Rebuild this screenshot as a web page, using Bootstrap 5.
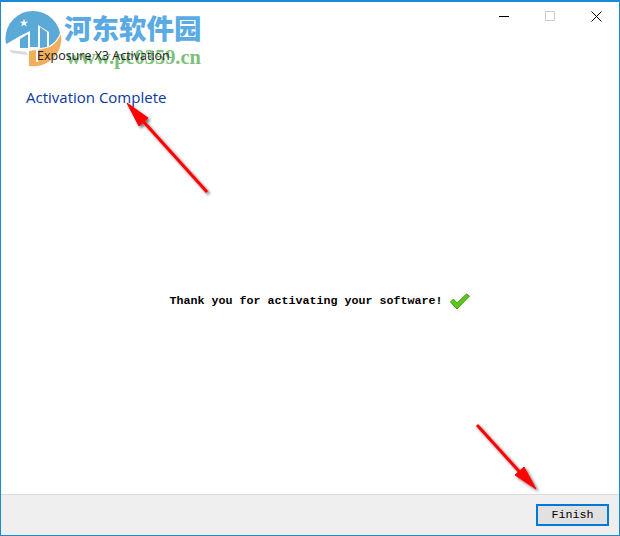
<!doctype html>
<html lang="en">
<head>
  <meta charset="utf-8">
  <title>Exposure X3 Activation</title>
  <link href="https://cdn.jsdelivr.net/npm/bootstrap@5.3.7/dist/css/bootstrap.min.css" rel="stylesheet">
  <style>
    html, body { height: 100%; background: #fff; overflow: hidden; }
    .win-frame {
      position: relative;
      width: 620px;
      height: 536px;
      border: 1px solid #1a8ad4;
      border-top-width: 2px;
      background: #fff;
    }
    .win-btn-cell { width: 46px; height: 28px; }
    .title-text {
      font: 12.5px "Open Sans", sans-serif;
      color: #222;
      padding: 17px 0 0 36px;
      line-height: 17px;
    }
    .heading-text {
      font: 15px "Open Sans", sans-serif;
      color: #0a3aa0;
      padding: 23px 0 0 25px;
      line-height: 20px;
    }
    .thanks-row { padding-left: 20px; padding-top: 1px; }
    .thanks-text {
      font: bold 11.66px "Liberation Mono", monospace;
      color: #000;
    }
    .foot-bar {
      height: 41px;
      background: #efefef;
      border-top: 1px solid #dcdcdc;
      padding: 9px 10px 0 0;
    }
    .finish-btn {
      width: 73px;
      height: 22px;
      padding: 1px 0 0;
      border: 2px solid #0078d7;
      border-radius: 0;
      background: #e1e1e1;
      color: #000;
      font: 11.66px/17px "Liberation Mono", monospace;
    }
    .wm-layer { position: absolute; left: -1px; top: -2px; pointer-events: none; }
    .wm-title {
      position: absolute;
      left: 63px;
      top: 9px;
      font: 900 27.5px/32px "Noto Sans CJK SC", sans-serif;
      color: #5aaae3;
      white-space: nowrap;
    }
    .wm-url {
      position: absolute;
      left: 65px;
      top: 44px;
      font: 700 20.4px/22px "Liberation Serif", serif;
      color: #7dc079;
      white-space: nowrap;
    }
    .title-over { position: relative; z-index: 2; }
    .arrow-layer { position: absolute; left: -1px; top: -2px; z-index: 3; pointer-events: none; }
  </style>
</head>
<body>

<div class="win-frame d-flex flex-column">
  <div class="d-flex justify-content-end flex-shrink-0">
    <div class="win-btn-cell d-flex align-items-center justify-content-center">
      <svg width="10" height="10"><path d="M0 5.500h10" stroke="#000"/></svg>
    </div>
    <div class="win-btn-cell d-flex align-items-center justify-content-center">
      <svg width="10" height="10"><rect x=".5" y=".5" width="9" height="9" fill="none" stroke="#ccc"/></svg>
    </div>
    <div class="win-btn-cell d-flex align-items-center justify-content-center">
      <svg width="11" height="11"><path d="M.5.5l10 10M10.500.5l-10 10" stroke="#000" fill="none"/></svg>
    </div>
  </div>
  <div class="title-text title-over">Exposure X3 Activation</div>

  <div class="heading-text">Activation Complete</div>

  <div class="flex-grow-1 d-flex justify-content-center align-items-center">
    <div class="thanks-row d-flex align-items-center gap-2">
      <span class="thanks-text">Thank you for activating your software!</span>
      <svg width="20" height="17" viewBox="0 0 20 17">
        <path d="M.5 9L7 16 19.500 3 16.500 1 7 10 3.500 6z" fill="#5cc81a" stroke="#3f9a12" stroke-width="1" stroke-linejoin="round"/>
      </svg>
    </div>
  </div>

  <div class="foot-bar d-flex justify-content-end flex-shrink-0">
    <button type="button" class="btn finish-btn">Finish</button>
  </div>

  <!-- watermark logo, drawn in page coordinates -->
  <svg class="wm-layer" width="70" height="72" viewBox="0 0 70 72">
    <path d="M6 44A27.500 27.500 0 0 1 60 33C58 39 54 43 49 46V32L38 25V47H30V31L20 36 8 43z" fill="#5aa9d6"/>
    <path d="M24 19l1.200 2.800h3l-2.400 1.800 1 2.900-2.800-1.700-2.800 1.700 1-2.900-2.400-1.800h3z" fill="#fff"/>
    <path d="M40 27l7 5v15l-7 1z" fill="#5aa9d6"/>
    <path d="M20 39l8-5v14H20z" fill="#5aa9d6"/>
    <path d="M61 34A28 28 0 0 1 29 66V51l7-1v12h2V50l12-3C55 44 59 39 61 34z" fill="#f3ae5c"/>
    <path d="M9 50L26 52 28 55 12 53z" fill="#d9d9d9"/>
  </svg>
  <div class="wm-title">河东软件园</div>
  <div class="wm-url">www.pc0359.cn</div>

  <svg class="arrow-layer" width="620" height="536" viewBox="0 0 620 536">
    <defs>
      <filter id="arrowShade" x="-30%" y="-30%" width="160%" height="160%">
        <feDropShadow dx="2" dy="2" stdDeviation="1.500" flood-color="#000" flood-opacity=".55"/>
      </filter>
    </defs>
    <g filter="url(#arrowShade)" fill="#f00" stroke="#f00">
      <path d="M207 192L142 120" stroke-width="3"/>
      <path d="M127 103L148 118 139 126z" stroke-width="1"/>
      <path d="M477 425L526 479" stroke-width="3"/>
      <path d="M536 489L515 475 524 467z" stroke-width="1"/>
    </g>
  </svg>
</div>

<script src="https://cdn.jsdelivr.net/npm/bootstrap@5.3.7/dist/js/bootstrap.bundle.min.js"></script>
</body>
</html>
